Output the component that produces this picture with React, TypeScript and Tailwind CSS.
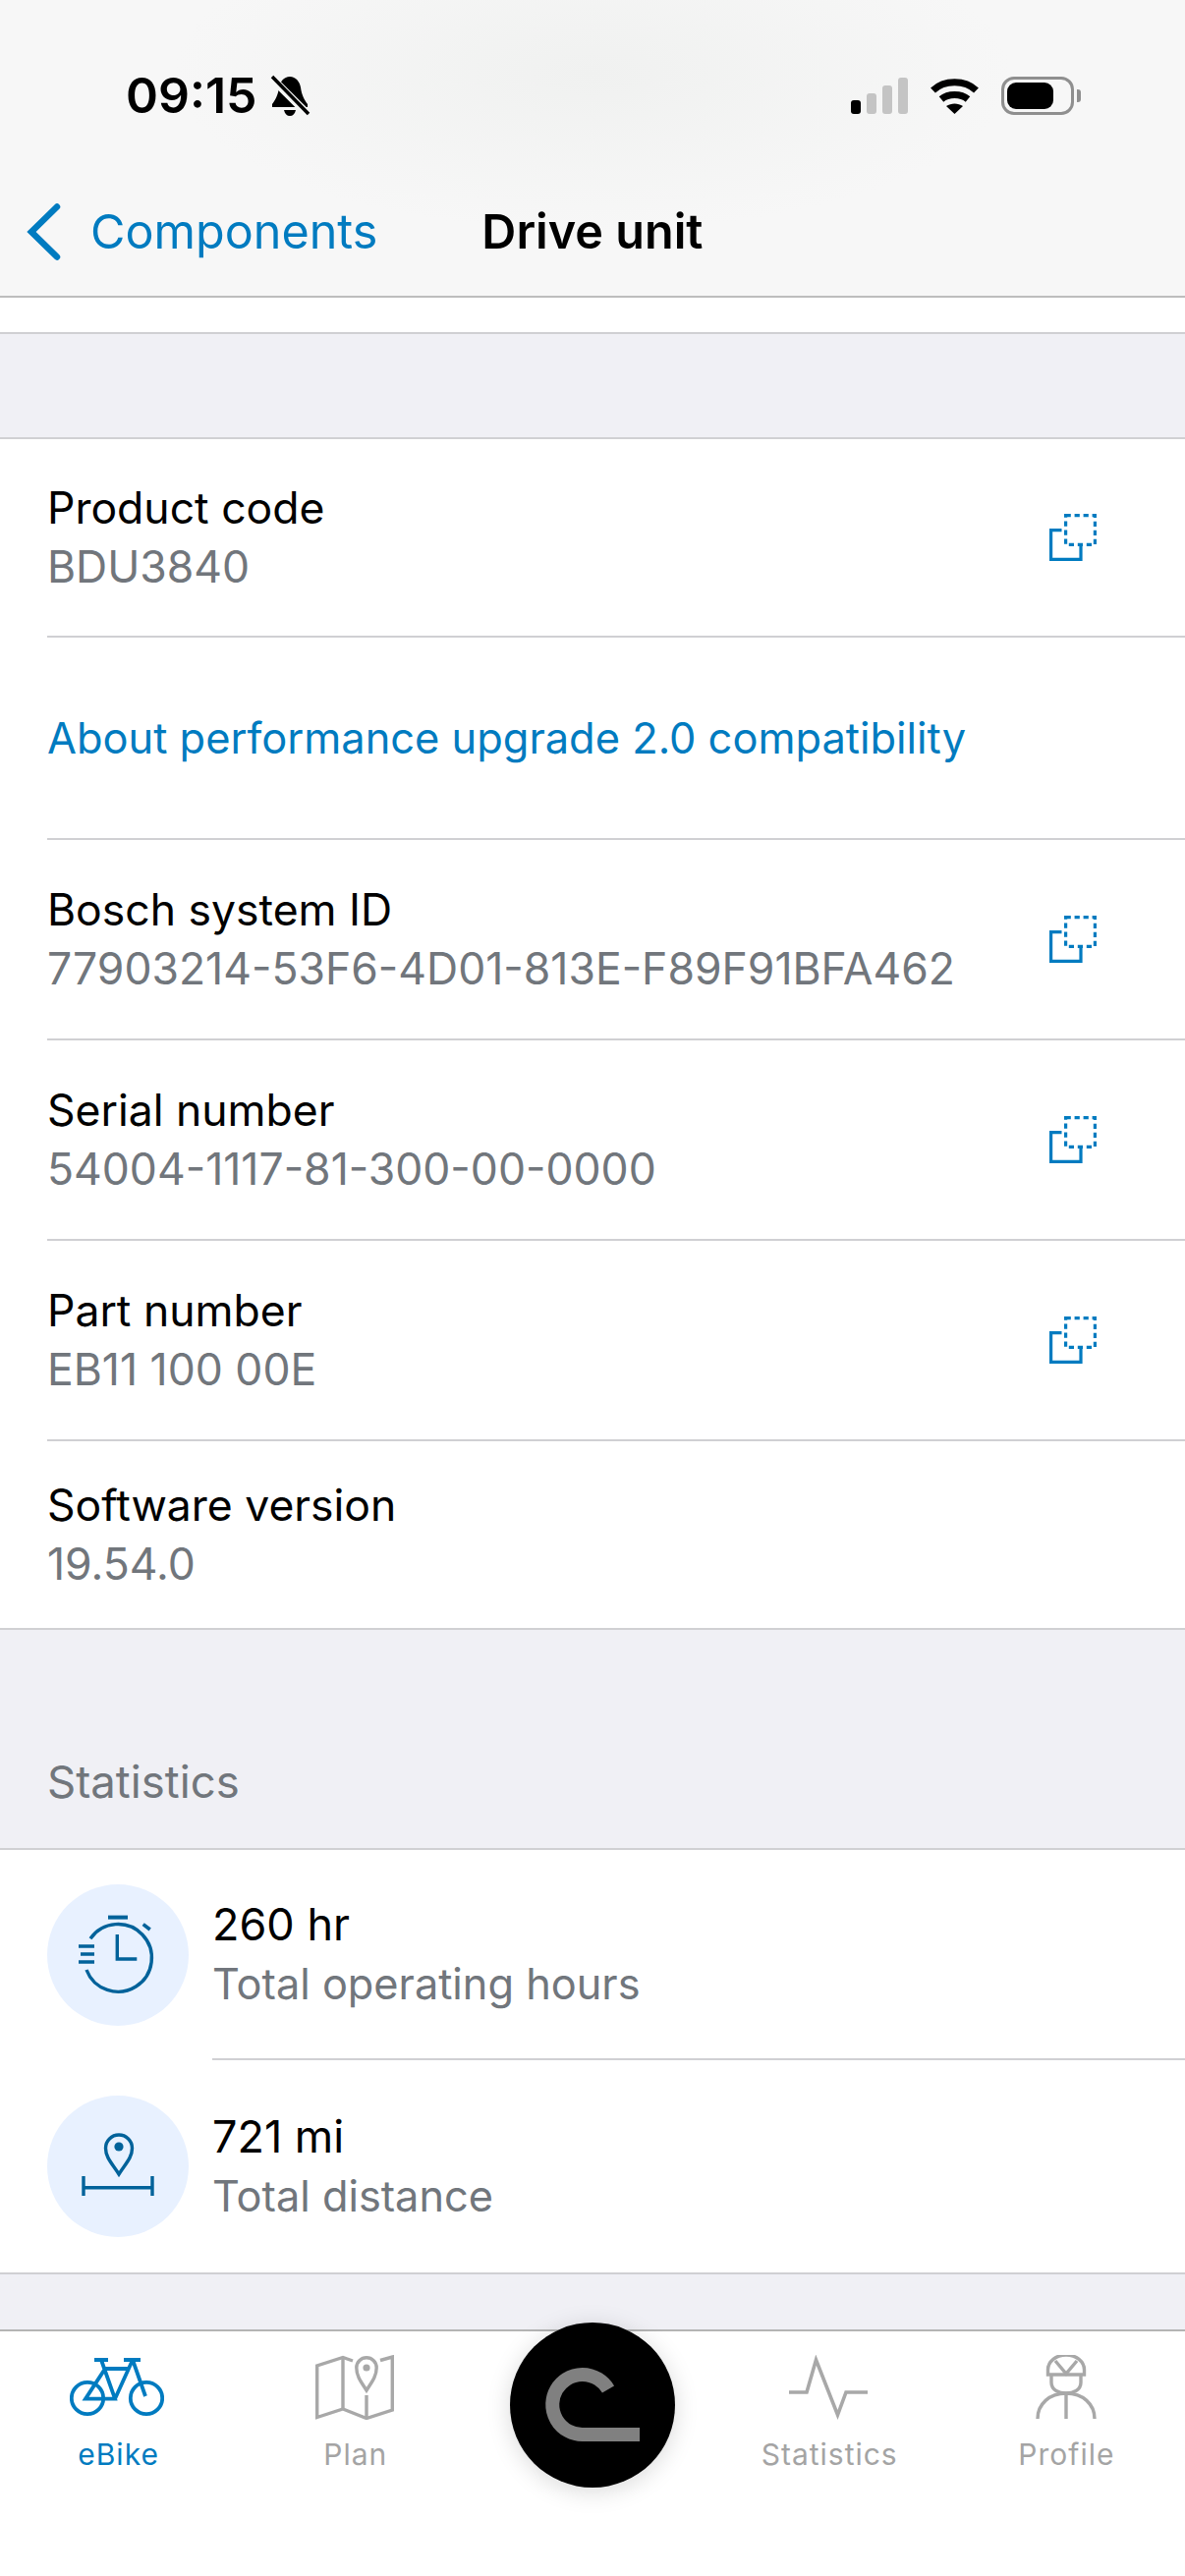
import React from "react";

const FONT = "font-['Inter','Noto_Sans',sans-serif]";

function CopyIcon() {
  return (
    <svg width="48" height="48" viewBox="0 0 48 48" fill="none" stroke="#007bc0" strokeWidth="3.2" className="shrink-0">
      <path d="M12.5 16.6H1.6V46.4H32V33" />
      <rect x="16.6" y="1.6" width="29.8" height="29.8" strokeDasharray="5.2 3.8" />
    </svg>
  );
}

function InfoRow({ title, value, copy = true, last = false, first = false }: { title: string; value: string; copy?: boolean; last?: boolean; first?: boolean }) {
  const h = last ? "h-[190px]" : first ? "h-[202px] border-b-2 border-[#d0d0d3]" : "h-[204px] border-b-2 border-[#d0d0d3]";
  return (
    <div className={"ml-[48px] flex items-center pr-[90px] " + h}>
      <div className="flex-1 flex flex-col">
        <span className="text-[44.5px] leading-[60px] text-black">{title}</span>
        <span className="text-[44.5px] leading-[60px] text-[#71767c]">{value}</span>
      </div>
      {copy && <CopyIcon />}
    </div>
  );
}

function TimerIcon() {
  return (
    <svg width="144" height="144" viewBox="0 0 144 144" fill="none" stroke="#00629a" strokeWidth="3.4">
      <path d="M44 55.2A34.3 34.3 0 1 1 40 87" />
      <path d="M62 33.6H82" strokeWidth="4" />
      <path d="M97.7 40.6L104.7 46" strokeWidth="3.6" />
      <path d="M32 63H48M34 71H48M32 79H48" />
      <path d="M71.3 51V76H91.3" />
    </svg>
  );
}

function DistanceIcon() {
  return (
    <svg width="144" height="144" viewBox="0 0 144 144" fill="none" stroke="#00629a" strokeWidth="3.4">
      <path d="M73 80C66 69 59.5 63 59.5 53.5A13.5 13.5 0 0 1 86.5 53.5C86.5 63 80 69 73 80Z" />
      <circle cx="73" cy="52" r="4.6" fill="#00629a" stroke="none" />
      <path d="M37 93.7H107M37 82V102M107 82V102" />
    </svg>
  );
}

function StatRow({ icon, value, label, divider }: { icon: React.ReactNode; value: string; label: string; divider?: boolean }) {
  return (
    <div className="relative flex items-center pl-[48px]">
      <div className="w-[144px] h-[144px] rounded-full bg-[#e8f1ff] shrink-0">{icon}</div>
      <div className={"ml-[24px] flex-1 flex flex-col justify-center " + (divider ? "h-[214px] border-b-2 border-[#d0d0d3]" : "h-[216px]")}>
        <span className="text-[45px] leading-[60px] text-black">{value}</span>
        <span className="text-[43.3px] leading-[60px] text-[#71767c]">{label}</span>
      </div>
    </div>
  );
}

function BikeIcon() {
  return (
    <svg className="-ml-[4px]" width="96" height="60" viewBox="0 0 96 60" fill="none" stroke="#007bc0" strokeWidth="3.8">
      <circle cx="18" cy="41" r="16.2" />
      <circle cx="78" cy="41" r="16.2" />
      <path d="M25 2H39M55 2H72" />
      <path d="M32 2L46 41.7H16L36 11H60M64 2L46 41.7M64 2L77 39" />
    </svg>
  );
}

function MapIcon() {
  return (
    <svg className="-ml-[2px]" width="80" height="66" viewBox="0 0 80 66" fill="none" stroke="#a8a8a8" strokeWidth="3.4">
      <path d="M38 6L28 2.5L1.7 11V63.5L28 55L52 64.5L78.3 56V2L66 5.5" />
      <path d="M28 2.5V55M52 41V64" />
      <path d="M52 36C47 28 41.8 22 41.8 13A10.2 10.2 0 0 1 62.2 13C62.2 22 57 28 52 36Z" />
      <circle cx="52" cy="13" r="3.6" fill="#a8a8a8" stroke="none" />
    </svg>
  );
}

function PulseIcon() {
  return (
    <svg className="-ml-[2px]" width="80" height="66" viewBox="0 0 80 66" fill="none" stroke="#a8a8a8" strokeWidth="3.6">
      <path d="M0 38H18L27.5 5L49.5 61L58 38H80" />
    </svg>
  );
}

function ProfileIcon() {
  return (
    <svg width="62" height="66" viewBox="0 0 62 66" fill="none" stroke="#a8a8a8" strokeWidth="3.4">
      <path d="M12.5 20V15A18.5 15 0 0 1 49.5 15V20Z" />
      <path d="M20 6L31 19L42 6" />
      <path d="M16 20V28C16 36 24 39 31 39C38 39 46 36 46 28V20" />
      <path d="M2 65C2 50 14 39 31 39C48 39 60 50 60 65M31 39V65" />
    </svg>
  );
}

function Tab({ icon, label, active }: { icon?: React.ReactNode; label?: string; active?: boolean }) {
  return (
    <div className="flex flex-col items-center pt-[24px]">
      <div className="h-[66px] flex items-center justify-center">{icon}</div>
      <span className={"mt-[17px] text-[30px] leading-[36px] tracking-[1px] " + (active ? "text-[#007bc0]" : "text-[#a4a4a4]")}>{label}</span>
    </div>
  );
}

export default function App() {
  return (
    <div className={"relative w-[1206px] h-[2622px] overflow-hidden bg-[#f0f0f5] flex flex-col " + FONT}>
      <header className="h-[303px] shrink-0 bg-[radial-gradient(ellipse_at_50%_25%,#f0f1f0_0%,#f7f7f7_50%)] border-b-2 border-[#bdbdbd] flex flex-col">
        <div className="h-[196px] pt-[72px] pl-[128px] pr-[113px] flex items-start justify-between">
          <div className="flex items-center">
            <span className="text-[50px] leading-[50px] font-semibold text-black">09:15</span>
            <svg className="ml-[12px]" width="42" height="44" viewBox="0 0 42 44">
              <path d="M21 3C27 3 31 8 32 14C33 22 36 27 39 31V34H3V31C6 27 9 22 10 14C11 8 15 3 21 3Z" fill="#000" />
              <path d="M15 37H27C26 41 24 43 21 43C18 43 16 41 15 37Z" fill="#000" />
              <path d="M2 4L40 42" stroke="#f6f7f6" strokeWidth="8" />
              <path d="M3 3L40 41" stroke="#000" strokeWidth="3.5" />
            </svg>
          </div>
          <div className="flex items-center h-[50px]">
            <svg width="58" height="37" viewBox="0 0 58 37">
              <rect x="0" y="23" width="10" height="14" rx="3" fill="#000" />
              <rect x="16" y="16" width="10" height="21" rx="3" fill="#c4c4c4" />
              <rect x="32" y="8" width="10" height="29" rx="3" fill="#c4c4c4" />
              <rect x="48" y="0" width="10" height="37" rx="3" fill="#c4c4c4" />
            </svg>
            <svg className="ml-[22px]" width="51" height="37" viewBox="0 0 51 37" fill="none" stroke="#000" strokeWidth="7">
              <path d="M3.5 13C15 2 36 2 47.5 13" />
              <path d="M12 22C19 16 32 16 39 22" />
              <path d="M25.5 37L17 29C22 25.5 29 25.5 34 29Z" fill="#000" stroke="none" />
            </svg>
            <div className="ml-[22px] relative w-[74px] h-[39px] rounded-[13px] border-[3px] border-[#8f8f8f] p-[3px]">
              <div className="w-[47px] h-full rounded-[9px] bg-black" />
              <div className="absolute -right-[10px] top-[10px] w-[4px] h-[13px] rounded-r-[3px] bg-[#8f8f8f]" />
            </div>
          </div>
        </div>
        <div className="relative flex items-center h-[80px]">
          <svg className="ml-[27px]" width="36" height="58" viewBox="0 0 36 58" fill="none" stroke="#007bc0" strokeWidth="6.5" strokeLinecap="round">
            <path d="M31 3.5L5 29L31 54.5" />
          </svg>
          <span className="ml-[29px] text-[48.5px] text-[#007bc0]">Components</span>
          <span className="ml-[106px] text-[48.5px] font-semibold text-black">Drive unit</span>
        </div>
      </header>

      <main className="flex-1 flex flex-col min-h-0">
        <div className="h-[37px] bg-white border-b-2 border-[#d0d0d3] shrink-0" />
        <div className="h-[105px] shrink-0" />
        <section className="bg-white border-t-2 border-b-2 border-[#d0d0d3]">
          <InfoRow title="Product code" value="BDU3840" first />
          <div className="ml-[48px] h-[206px] border-b-2 border-[#d0d0d3] flex items-center">
            <span className="text-[43.4px] leading-[60px] text-[#007bc0]">About performance upgrade 2.0 compatibility</span>
          </div>
          <InfoRow title="Bosch system ID" value="77903214-53F6-4D01-813E-F89F91BFA462" />
          <InfoRow title="Serial number" value="54004-1117-81-300-00-0000" />
          <InfoRow title="Part number" value="EB11 100 00E" />
          <InfoRow title="Software version" value="19.54.0" copy={false} last />
        </section>
        <div className="h-[222px] shrink-0 flex items-end pl-[48px] pb-[42px]">
          <span className="text-[45.5px] leading-[50px] text-[#71767c]">Statistics</span>
        </div>
        <section className="bg-white border-t-2 border-b-2 border-[#d0d0d3]">
          <StatRow icon={<TimerIcon />} value="260 hr" label="Total operating hours" divider />
          <StatRow icon={<DistanceIcon />} value="721 mi" label="Total distance" />
        </section>
      </main>

      <nav className="relative h-[251px] shrink-0 bg-white border-t-2 border-[#b4b4b4] grid grid-cols-5">
        <Tab icon={<BikeIcon />} label="eBike" active />
        <Tab icon={<MapIcon />} label="Plan" />
        <div />
        <Tab icon={<PulseIcon />} label="Statistics" />
        <Tab icon={<ProfileIcon />} label="Profile" />
        <div className="absolute left-[519px] -top-[9px] w-[168px] h-[168px] rounded-full bg-black shadow-[0_4px_24px_rgba(0,0,0,0.15)]">
          <svg width="168" height="168" viewBox="0 0 168 168" fill="none" stroke="#808080" strokeWidth="14">
            <path d="M100 68A30.5 30.5 0 1 0 73.5 114H132" />
          </svg>
        </div>
      </nav>
    </div>
  );
}
